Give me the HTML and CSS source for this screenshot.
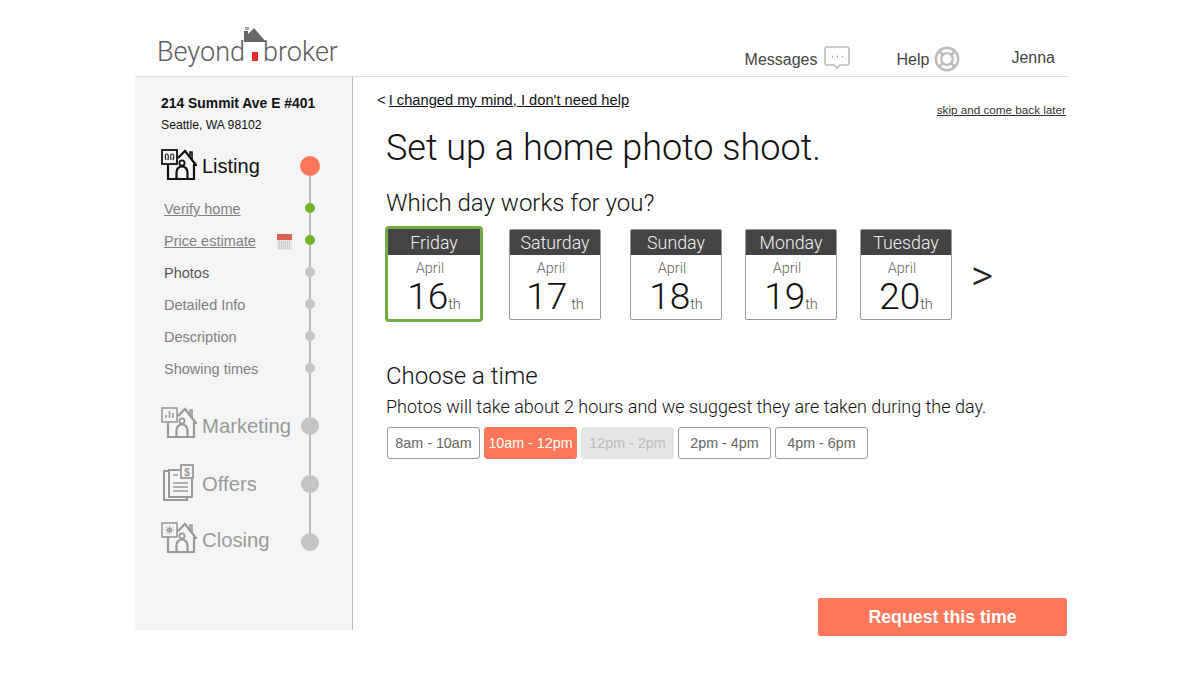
FILE: index.html
```html
<!DOCTYPE html>
<html>
<head>
    <title>Beyond Broker</title>
    <link rel="stylesheet" href="styles.css">
</head>
<body>
    <svg class="defs" width="0" height="0">
        <symbol id="house" viewBox="0 0 36 32">
            <path d="M17 9 L24 2 L35 16 H33 V30 H7 V15" fill="none" stroke="currentColor" stroke-width="2.2"/>
            <path d="M29 7 V3 H31 V10" fill="none" stroke="currentColor" stroke-width="1.6"/>
            <circle cx="21" cy="14" r="2.6" fill="none" stroke="currentColor" stroke-width="1.8"/>
            <path d="M15.5 30 V23 A5.5 5.5 0 0 1 26.5 23 V30" fill="none" stroke="currentColor" stroke-width="2.2"/>
        </symbol>
    </svg>

    <div class="page">
        <header class="top">
            <div class="logo">
                <span>Beyond</span><span class="logo-door"></span><span>broker</span>
                <svg class="logo-roof" width="24" height="18" viewBox="0 0 24 18">
                    <path d="M2 0 H6 V3 H2 Z" fill="#aaa"/>
                    <path d="M1 4 H5 V7 L11 1 L23 15 H1 Z" fill="#666"/>
                </svg>
            </div>
            <nav class="top-nav">
                <a class="nav-messages">Messages
                    <svg width="28" height="24" viewBox="0 0 28 24">
                        <path d="M4 1 H24 Q26 1 26 3 V17 Q26 19 24 19 H17 L14 22 L11 19 H4 Q2 19 2 17 V3 Q2 1 4 1 Z" fill="none" stroke="#bbb" stroke-width="1.6"/>
                        <path d="M9 10.5 h1 M14 10.5 h1 M19 10.5 h1" stroke="#888" stroke-width="1.4"/>
                    </svg>
                </a>
                <a class="nav-help">Help
                    <svg width="26" height="26" viewBox="0 0 26 26">
                        <circle cx="13" cy="13" r="11.2" fill="none" stroke="#bbb" stroke-width="2.4"/>
                        <circle cx="13" cy="13" r="5.8" fill="none" stroke="#bbb" stroke-width="2.2"/>
                        <path d="M5 5 L9 9 M21 5 L17 9 M5 21 L9 17 M21 21 L17 17" stroke="#bbb" stroke-width="2.6"/>
                    </svg>
                </a>
                <a class="nav-user">Jenna</a>
            </nav>
        </header>

        <div class="columns">
            <aside class="sidebar">
                <div class="address">
                    <div class="street">214 Summit Ave E #401</div>
                    <div class="city">Seattle, WA 98102</div>
                </div>

                <div class="steps">
                    <div class="step-line"></div>

                    <div class="step step-current">
                        <span class="step-icon">
                            <svg width="36" height="32"><use href="#house" width="36" height="32"/></svg>
                            <svg class="step-badge" width="17" height="16" viewBox="0 0 17 16">
                                <rect x="1" y="1" width="15" height="14" fill="#f5f5f5" stroke="currentColor" stroke-width="1.8"/>
                                <path d="M5 11 Q3 5 6 5 Q8 5 7 11 M10 11 Q9 5 11 5 Q14 5 12 11" fill="none" stroke="currentColor" stroke-width="1.1"/>
                            </svg>
                        </span>
                        <span class="step-name">Listing</span>
                        <span class="dot dot-big dot-orange"></span>
                    </div>

                    <ul class="substeps">
                        <li class="sub done"><a>Verify home</a><span class="dot dot-small dot-green"></span></li>
                        <li class="sub done"><a>Price estimate</a>
                            <svg class="cal" width="15" height="18" viewBox="0 0 15 18">
                                <rect x="0" y="2" width="15" height="16" fill="#e6e6e6"/>
                                <rect x="0" y="2" width="15" height="6" fill="#d9634c"/>
                                <path d="M2 10 H13 M2 12 H13 M2 14 H13 M2 16 H13" stroke="#aaa" stroke-width="1" stroke-dasharray="1 1"/>
                            </svg>
                            <span class="dot dot-small dot-green"></span></li>
                        <li class="sub active">Photos<span class="dot dot-small"></span></li>
                        <li class="sub">Detailed Info<span class="dot dot-small"></span></li>
                        <li class="sub">Description<span class="dot dot-small"></span></li>
                        <li class="sub">Showing times<span class="dot dot-small"></span></li>
                    </ul>

                    <div class="step step-marketing">
                        <span class="step-icon">
                            <svg width="36" height="32"><use href="#house" width="36" height="32"/></svg>
                            <svg class="step-badge" width="17" height="16" viewBox="0 0 17 16">
                                <rect x="1" y="1" width="15" height="14" fill="#f5f5f5" stroke="currentColor" stroke-width="1.6"/>
                                <path d="M5 11 V8 M8.5 11 V4 M12 11 V6" stroke="currentColor" stroke-width="1.6"/>
                            </svg>
                        </span>
                        <span class="step-name">Marketing</span>
                        <span class="dot dot-big"></span>
                    </div>

                    <div class="step step-offers">
                        <span class="step-icon">
                            <svg width="34" height="38" viewBox="0 0 34 38">
                                <path d="M7 8 H3 V37 H26 V34" fill="none" stroke="currentColor" stroke-width="2"/>
                                <path d="M19 7 H8 V34 H31 V16" fill="none" stroke="currentColor" stroke-width="2"/>
                                <path d="M12 12 H17 M12 20 H27 M12 24 H27 M12 28 H27" stroke="currentColor" stroke-width="1.6"/>
                                <rect x="20" y="2" width="12" height="13" fill="#f5f5f5" stroke="currentColor" stroke-width="1.8"/>
                                <text x="26" y="12.5" font-size="10" font-family="Liberation Sans" font-weight="bold" text-anchor="middle" fill="currentColor">$</text>
                            </svg>
                        </span>
                        <span class="step-name">Offers</span>
                        <span class="dot dot-big"></span>
                    </div>

                    <div class="step step-closing">
                        <span class="step-icon">
                            <svg width="36" height="32"><use href="#house" width="36" height="32"/></svg>
                            <svg class="step-badge" width="17" height="16" viewBox="0 0 17 16">
                                <rect x="1" y="1" width="15" height="14" fill="#f5f5f5" stroke="currentColor" stroke-width="1.6"/>
                                <circle cx="8.5" cy="8" r="2" fill="none" stroke="currentColor" stroke-width="1.2"/>
                                <path d="M8.5 3.5 V12.5 M4 8 H13 M5.5 5 L11.5 11 M11.5 5 L5.5 11" stroke="currentColor" stroke-width="0.8"/>
                            </svg>
                        </span>
                        <span class="step-name">Closing</span>
                        <span class="dot dot-big"></span>
                    </div>
                </div>
            </aside>

            <main class="content">
                <div class="content-top">
                    <div class="back">&lt; <a>I changed my mind, I don't need help</a></div>
                    <a class="skip">skip and come back later</a>
                </div>

                <h1>Set up a home photo shoot.</h1>

                <h2 class="day-title">Which day works for you?</h2>
                <div class="days">
                    <div class="day selected">
                        <div class="day-name">Friday</div>
                        <div class="day-month">April</div>
                        <div class="day-num">16<small>th</small></div>
                    </div>
                    <div class="day">
                        <div class="day-name">Saturday</div>
                        <div class="day-month">April</div>
                        <div class="day-num">17<small class="wide">th</small></div>
                    </div>
                    <div class="day">
                        <div class="day-name">Sunday</div>
                        <div class="day-month">April</div>
                        <div class="day-num">18<small>th</small></div>
                    </div>
                    <div class="day">
                        <div class="day-name">Monday</div>
                        <div class="day-month">April</div>
                        <div class="day-num">19<small>th</small></div>
                    </div>
                    <div class="day">
                        <div class="day-name">Tuesday</div>
                        <div class="day-month">April</div>
                        <div class="day-num">20<small>th</small></div>
                    </div>
                    <div class="next">&gt;</div>
                </div>

                <h2 class="time-title">Choose a time</h2>
                <p class="time-note">Photos will take about 2 hours and we suggest they are taken during the day.</p>
                <div class="times">
                    <div class="time">8am - 10am</div>
                    <div class="time picked">10am - 12pm</div>
                    <div class="time off">12pm - 2pm</div>
                    <div class="time">2pm - 4pm</div>
                    <div class="time">4pm - 6pm</div>
                </div>

                <div class="actions">
                    <button class="request">Request this time</button>
                </div>
            </main>
        </div>
    </div>
</body>
</html>
```

FILE: styles.css
```css
body {
    margin: 0;
    background: white;
    font-family: 'Liberation Sans', Arial, sans-serif;
    color: #111;
}

a {
    color: inherit;
}

.defs {
    position: absolute;
}

.page {
    width: 932px;
    margin-left: 135px;
    height: 686px;
    overflow: hidden;
}

.top {
    height: 76px;
    border-bottom: 1px solid #ddd;
    display: flex;
    justify-content: space-between;
}

.logo {
    position: relative;
    display: flex;
    align-items: baseline;
    height: 42px;
    margin: 35px 0 0 22px;
    font-family: 'Roboto', sans-serif;
    font-weight: 300;
    font-size: 27px;
    line-height: 34px;
    color: #5e5e5e;
}

.logo-door {
    width: 6px;
    height: 9px;
    background: #ee2b2b;
    margin: 0 5px 0 7px;
}

.logo-roof {
    position: absolute;
    left: 86px;
    top: -8px;
}

.top-nav {
    display: flex;
    font-size: 16px;
    color: #444;
    padding-top: 51px;
}

.top-nav a {
    display: flex;
    height: 26px;
}

.top-nav svg {
    margin-top: -5px;
}

.nav-messages {
    margin-right: 46px;
}

.nav-messages svg {
    margin-left: 5px;
}

.nav-help {
    margin-right: 51px;
}

.nav-help svg {
    margin-left: 5px;
}

.nav-user {
    margin-right: 12px;
    margin-top: -2px;
}

.columns {
    display: flex;
}

.sidebar {
    width: 217px;
    height: 553px;
    background: #f5f5f5;
    border-right: 1px solid #bbb;
    flex: none;
}

.address {
    padding: 18px 0 0 26px;
}

.street {
    font-size: 13.9px;
    font-weight: bold;
    line-height: 16px;
}

.city {
    font-size: 12.2px;
    line-height: 16px;
    margin-top: 6px;
}

.steps {
    position: relative;
    margin-top: 12px;
}

.step-line {
    position: absolute;
    left: 174px;
    top: 21px;
    width: 2px;
    height: 376px;
    background: #bbb;
}

.step {
    display: flex;
    align-items: center;
    height: 42px;
    padding-left: 26px;
    color: #999;
    font-size: 20.3px;
}

.step-current {
    color: #111;
    font-size: 20px;
}

.step-marketing {
    margin-top: 20px;
}

.step-offers,
.step-closing {
    margin-top: 16px;
}

.step-closing .step-name {
    padding-bottom: 4px;
}

.step-icon {
    position: relative;
    display: block;
    width: 41px;
    height: 32px;
    flex: none;
    margin-bottom: 6px;
}

.step-current .step-icon {
    margin-bottom: 2px;
}

.step-closing .step-icon {
    margin-bottom: 8px;
}

.step-offers .step-icon {
    height: 38px;
    margin-bottom: 4px;
}

.step-badge {
    position: absolute;
    left: 0;
    top: 0;
}

.step-icon svg {
    display: block;
}

.step-name {
    flex: 1;
}

.dot {
    position: relative;
    display: block;
    background: #c4c4c4;
    border-radius: 50%;
    flex: none;
}

.dot-big {
    width: 18px;
    height: 18px;
    margin-right: 33px;
}

.dot-orange {
    width: 20px;
    height: 20px;
    margin-right: 32px;
    background: #ff7759;
}

.dot-small {
    width: 10px;
    height: 10px;
    margin-right: 37px;
    margin-bottom: 2px;
}

.dot-green {
    background: #73b32d;
}

.substeps {
    list-style: none;
    margin: 6px 0 0;
    padding: 0;
}

.sub {
    display: flex;
    align-items: center;
    justify-content: space-between;
    height: 32px;
    padding-left: 29px;
    font-size: 14.5px;
    color: #808080;
}

.sub > a {
    text-decoration: underline;
    margin-right: auto;
}

.sub.active {
    color: #555;
}

.cal {
    margin-right: 13px;
}

.content {
    flex: 1;
    padding-left: 24px;
}

.content-top {
    display: flex;
    justify-content: space-between;
    font-size: 14.7px;
    padding-top: 15px;
    height: 23px;
}

.back a {
    text-decoration: underline;
    margin-left: -1px;
}

.skip {
    font-size: 11.7px;
    color: #333;
    text-decoration: underline;
    margin: 11px 1px 0 0;
}

h1 {
    font-family: 'Roboto', sans-serif;
    font-weight: 300;
    font-size: 36px;
    line-height: 42px;
    margin: 12px 0 0 9px;
}

h2 {
    font-family: 'Roboto', sans-serif;
    font-weight: 300;
    font-size: 24px;
    line-height: 28px;
    margin: 0 0 0 9px;
}

.day-title {
    margin-top: 20px;
}

.days {
    display: flex;
    align-items: flex-start;
    margin: 9px 0 0 9px;
    height: 96px;
}

.day {
    box-sizing: border-box;
    width: 92px;
    height: 91px;
    margin-top: 3px;
    border: 1px solid #999;
    border-radius: 2px;
    margin-right: 23px;
    text-align: center;
    color: #666;
}

.day:nth-child(1) {
    margin-right: 26px;
}

.day:nth-child(2) {
    margin-right: 29px;
}

.day.selected {
    width: 98px;
    height: 96px;
    margin-top: 0;
    margin-left: -1px;
    border: 3px solid #73ae44;
    border-radius: 4px;
}

.day-name {
    font-family: 'Roboto', sans-serif;
    font-weight: 300;
    background: #444;
    color: #f2f2f2;
    font-size: 17.8px;
    line-height: 25px;
    height: 25px;
}

.selected .day-name {
    height: 26px;
    line-height: 27px;
}

.day-month {
    font-family: 'Roboto', sans-serif;
    font-weight: 300;
    font-size: 14.5px;
    line-height: 18px;
    margin-top: 5px;
    padding-right: 8px;
}

.day-num {
    font-family: 'Roboto', sans-serif;
    font-weight: 300;
    font-size: 37px;
    line-height: 34px;
    margin-top: 2px;
    color: #111;
}

.day-num small {
    font-size: 14.5px;
    color: #555;
}

.day-num small.wide {
    margin-left: 4px;
}

.next {
    font-family: 'Roboto', sans-serif;
    font-weight: 300;
    font-size: 43px;
    line-height: 40px;
    margin: 29px 0 0 -4px;
    color: #222;
}

.time-title {
    margin-top: 40px;
}

.time-note {
    font-family: 'Roboto', sans-serif;
    font-weight: 300;
    margin: 6px 0 0 9px;
    font-size: 18px;
    line-height: 21px;
}

.times {
    display: flex;
    gap: 4px;
    margin: 10px 0 0 10px;
}

.time {
    box-sizing: border-box;
    width: 93px;
    height: 32px;
    border: 1px solid #999;
    border-radius: 3px;
    font-size: 14.3px;
    line-height: 30px;
    text-align: center;
    color: #666;
}

.time.picked {
    background: #ff7759;
    border-color: #ff7759;
    color: white;
}

.time.off {
    background: #e6e6e6;
    border-color: #e6e6e6;
    color: #bbb;
}

.actions {
    display: flex;
    justify-content: flex-end;
    margin-top: 139px;
}

.request {
    width: 249px;
    height: 38px;
    background: #ff7759;
    border: none;
    border-radius: 2px;
    color: white;
    font-family: inherit;
    font-weight: bold;
    font-size: 17.8px;
}
```
